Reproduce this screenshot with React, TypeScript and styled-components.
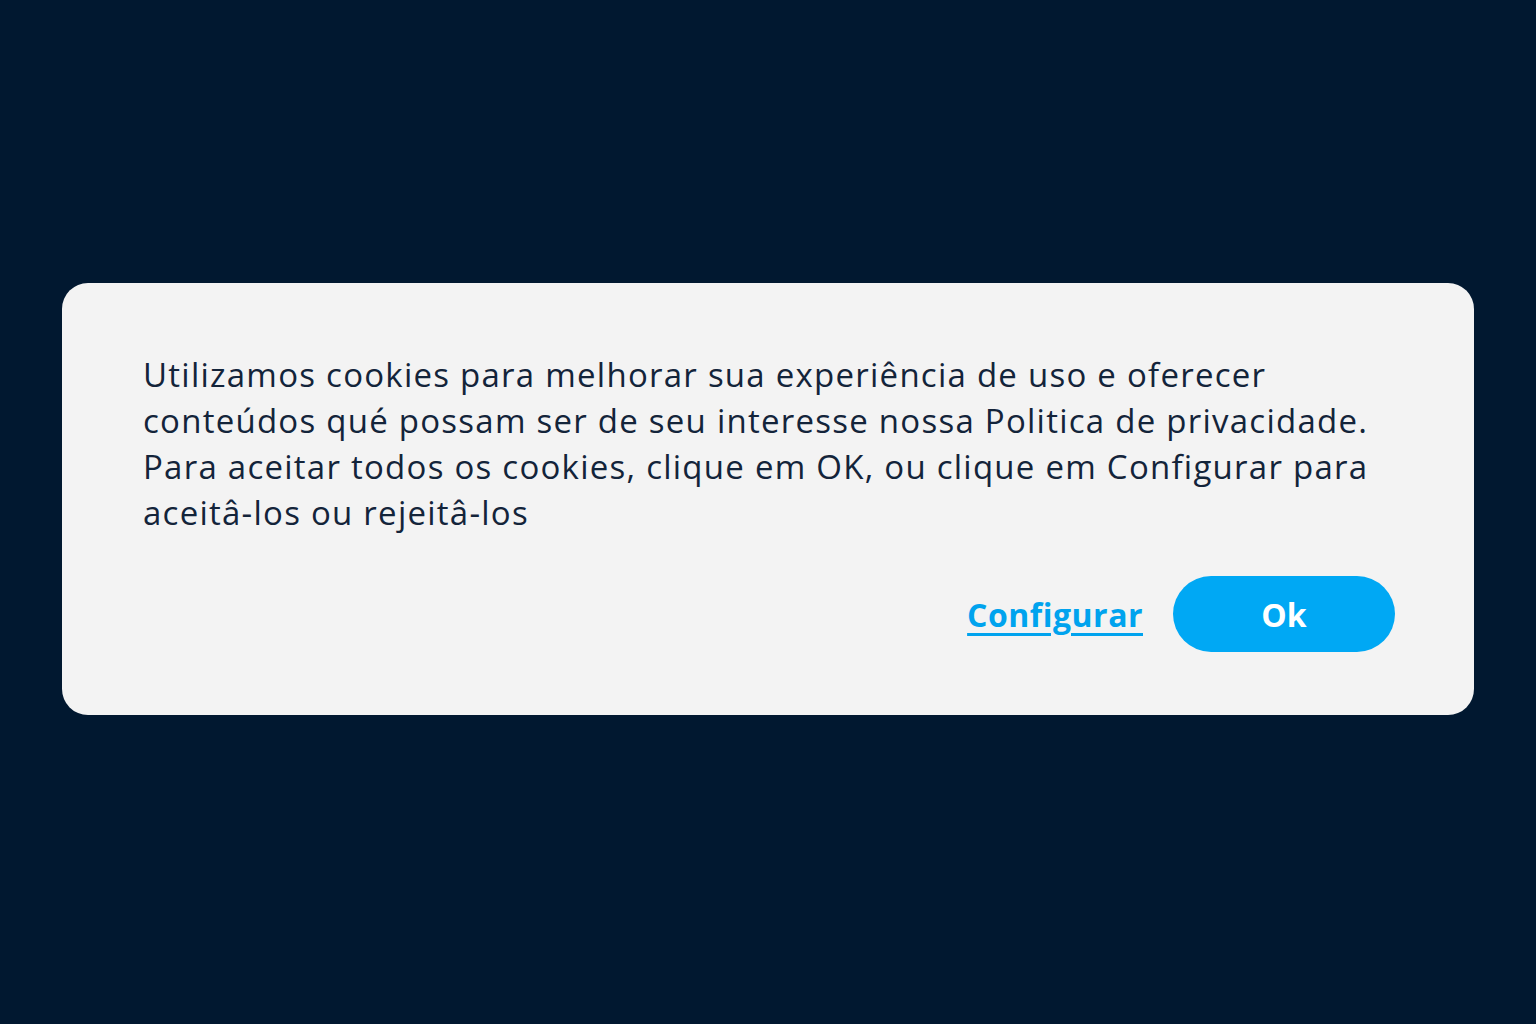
import React from 'react';
import styled, { createGlobalStyle } from 'styled-components';

const GlobalStyle = createGlobalStyle`
  html, body {
    margin: 0;
    padding: 0;
    background: #011830;
  }
  #root {
    min-height: 100vh;
  }
`;

export default function App() {
  return (
    <>
      <GlobalStyle />
      <Page>
        <Banner>
          <Message>
            Utilizamos cookies para melhorar sua experiência de uso e oferecer
            <br />
            conteúdos qué possam ser de seu interesse nossa Politica de privacidade.
            <br />
            Para aceitar todos os cookies, clique em OK, ou clique em Configurar para
            <br />
            aceitâ-los ou rejeitâ-los
          </Message>
          <Actions>
            <ConfigLink href="#">Configurar</ConfigLink>
            <OkButton>Ok</OkButton>
          </Actions>
        </Banner>
      </Page>
    </>
  );
}

const Page = styled.div`
  min-height: 1024px;
  box-sizing: border-box;
  padding: 283px 62px 0;
  display: flex;
  justify-content: center;
  align-items: flex-start;
  font-family: 'Open Sans', Lato, sans-serif;
`;

const Banner = styled.div`
  width: 1412px;
  height: 432px;
  box-sizing: border-box;
  background: #f3f3f3;
  border-radius: 26px;
  padding: 69px 79px 63px 81px;
  display: flex;
  flex-direction: column;
`;

const Message = styled.p`
  margin: 0;
  font-size: 33px;
  line-height: 46px;
  letter-spacing: 1.25px;
  color: #13243a;
  font-weight: 400;
  white-space: nowrap;
`;

const Actions = styled.div`
  margin-top: auto;
  display: flex;
  justify-content: flex-end;
  align-items: center;
  gap: 30px;
`;

const ConfigLink = styled.a`
  font-size: 32px;
  font-weight: 700;
  letter-spacing: 0.5px;
  color: #00a3ee;
  text-decoration: underline;
  text-decoration-thickness: 3px;
  text-underline-offset: 6px;
`;

const OkButton = styled.button`
  width: 222px;
  height: 76px;
  border: none;
  border-radius: 38px;
  background: #00a8f4;
  color: #ffffff;
  font-family: inherit;
  font-size: 32px;
  font-weight: 700;
  cursor: pointer;
`;
